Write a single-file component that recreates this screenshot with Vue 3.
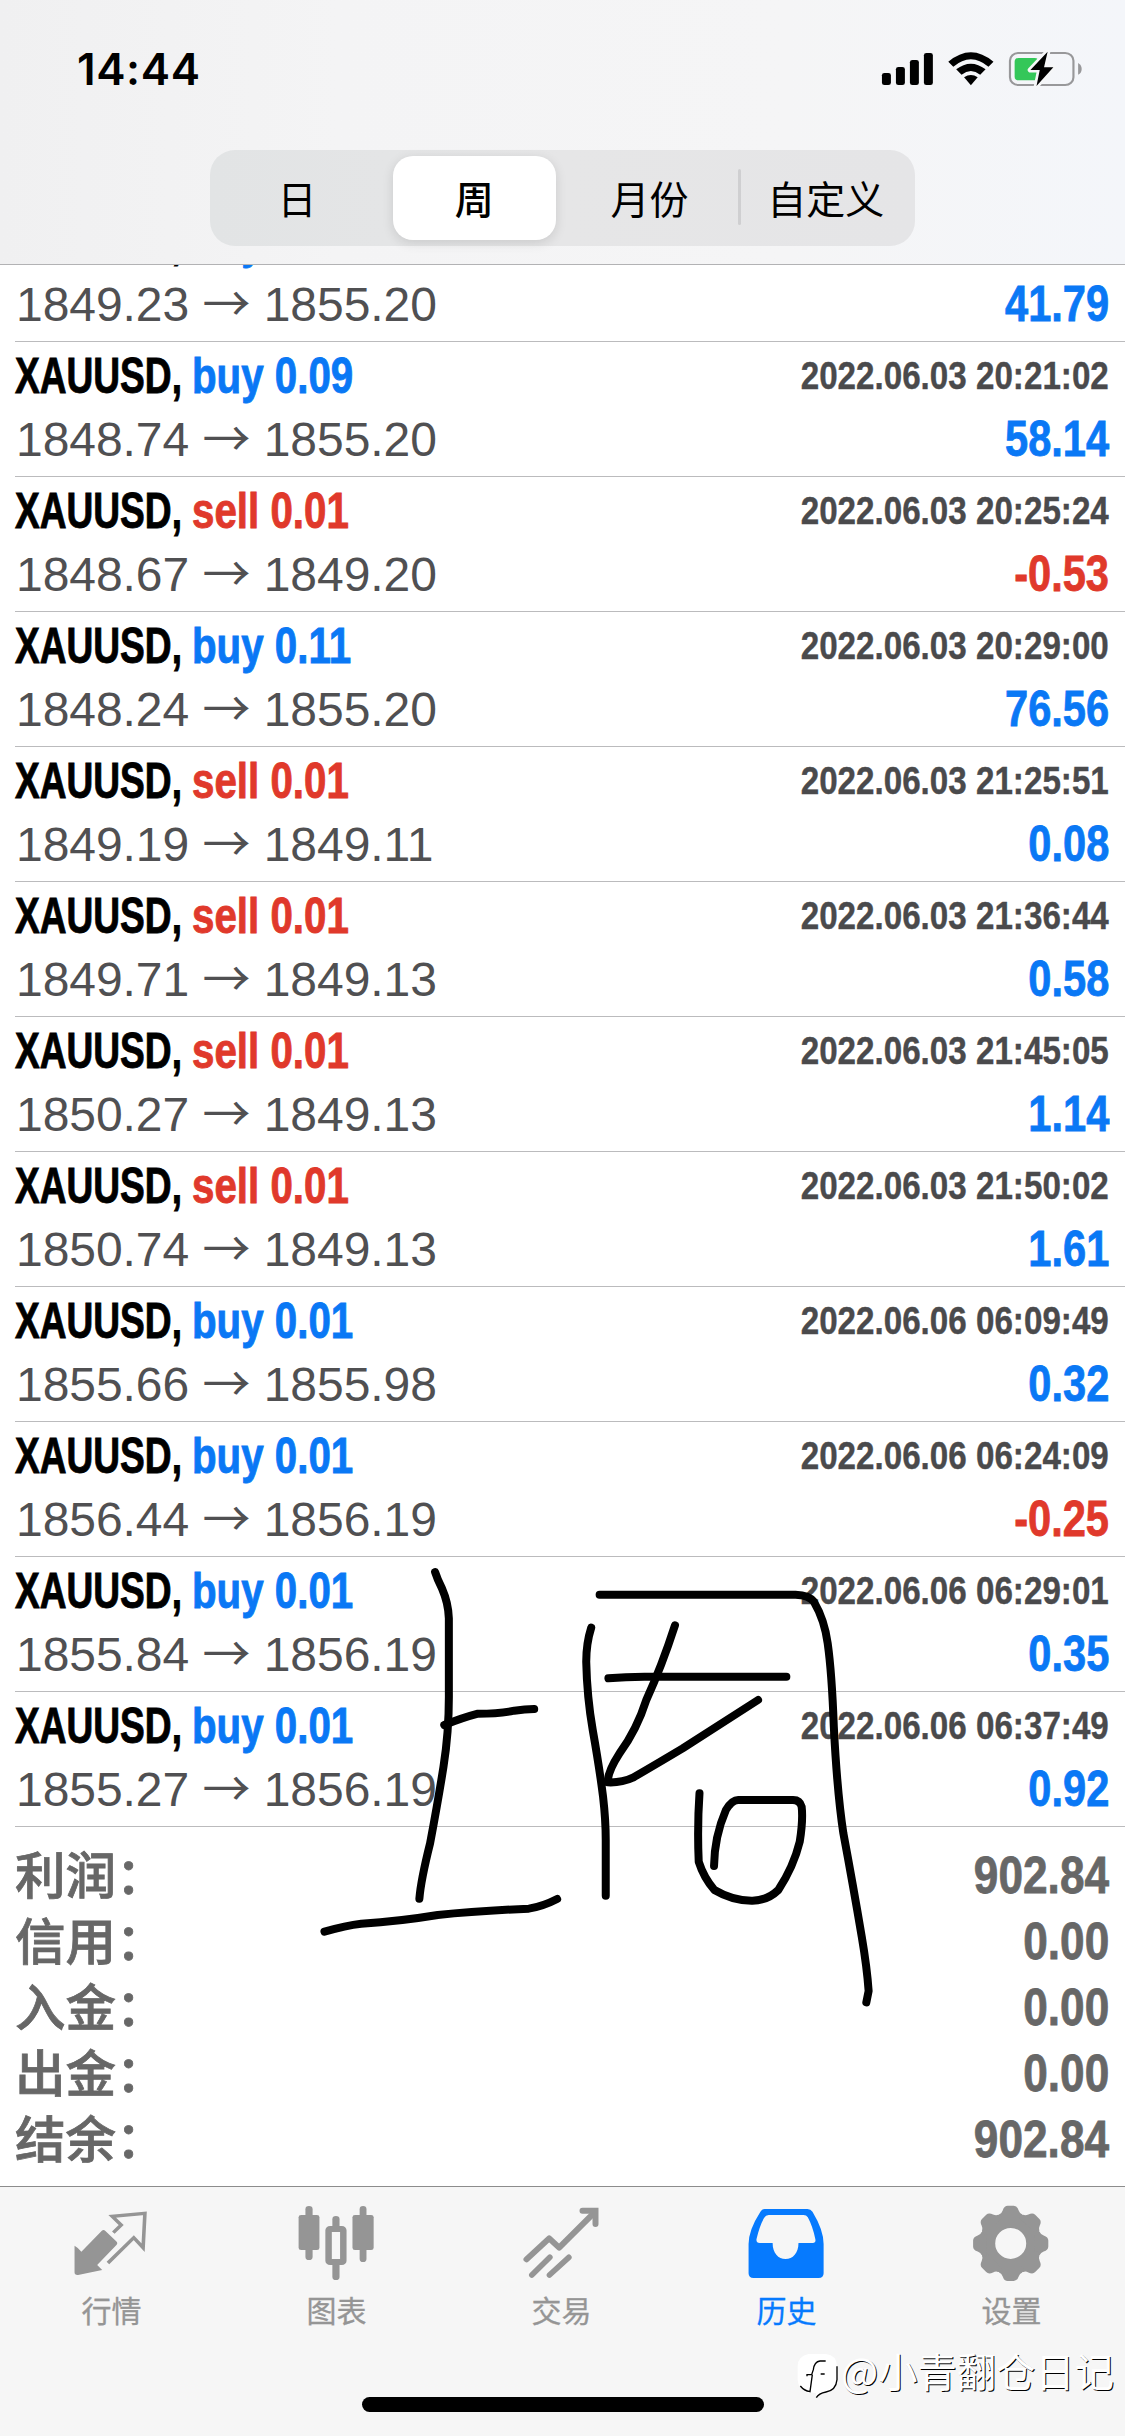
<script setup>
const segments = ['日', '周', '月份', '自定义']

const deals = [
  ['buy', '0.07', '2022.06.03 20:17:31', '1849.23', '1855.20', '41.79'],
  ['buy', '0.09', '2022.06.03 20:21:02', '1848.74', '1855.20', '58.14'],
  ['sell', '0.01', '2022.06.03 20:25:24', '1848.67', '1849.20', '-0.53'],
  ['buy', '0.11', '2022.06.03 20:29:00', '1848.24', '1855.20', '76.56'],
  ['sell', '0.01', '2022.06.03 21:25:51', '1849.19', '1849.11', '0.08'],
  ['sell', '0.01', '2022.06.03 21:36:44', '1849.71', '1849.13', '0.58'],
  ['sell', '0.01', '2022.06.03 21:45:05', '1850.27', '1849.13', '1.14'],
  ['sell', '0.01', '2022.06.03 21:50:02', '1850.74', '1849.13', '1.61'],
  ['buy', '0.01', '2022.06.06 06:09:49', '1855.66', '1855.98', '0.32'],
  ['buy', '0.01', '2022.06.06 06:24:09', '1856.44', '1856.19', '-0.25'],
  ['buy', '0.01', '2022.06.06 06:29:01', '1855.84', '1856.19', '0.35'],
  ['buy', '0.01', '2022.06.06 06:37:49', '1855.27', '1856.19', '0.92'],
].map(([side, volume, time, open, close, profit]) => ({ side, volume, time, open, close, profit }))

const totals = [
  ['利润：', '902.84'],
  ['信用：', '0.00'],
  ['入金：', '0.00'],
  ['出金：', '0.00'],
  ['结余：', '902.84'],
]

const teeth = [0, 45, 90, 135, 180, 225, 270, 315]
</script>

<template>
  <div class="screen">
    <header class="top">
      <div class="status">
        <span class="clock">14:44</span>
        <svg class="signals" viewBox="880 150 580 114" preserveAspectRatio="none">
          <rect x="891" y="219" width="25" height="36" rx="7" />
          <rect x="930" y="201" width="25" height="54" rx="7" />
          <rect x="969" y="180" width="25" height="75" rx="7" />
          <rect x="1008" y="159" width="25" height="96" rx="7" />
          <path d="M1076 185Q1139 128 1202 185L1188 200Q1139 155 1090 200Z" />
          <path d="M1098 208Q1139 174 1180 208L1165 224Q1139 202 1113 224Z" />
          <path d="M1120 232Q1139 218 1158 232L1139 256Z" />
          <rect x="1248" y="159" width="177" height="96" rx="23" fill="none" stroke="#98989a" stroke-width="6" />
          <path d="M1438 189Q1448 195 1448 207T1438 224Z" fill="#98989a" />
          <rect x="1261" y="174" width="67" height="67" rx="11" fill="#34c759" />
          <path d="M1353 155L1305 210H1331L1322 258L1369 202H1343Z" fill="#000" stroke="#f6f7f8" stroke-width="15" paint-order="stroke" stroke-linejoin="round" />
        </svg>
      </div>
      <nav class="segmented">
        <div v-for="(s, i) in segments" :key="s" class="segment" :class="{ on: i === 1, ruled: i === 3 }">
          <span>{{ s }}</span>
        </div>
      </nav>
    </header>

    <main class="history">
      <div class="deals">
        <article v-for="d in deals" :key="d.time" class="deal">
          <div class="line">
            <div class="title">
              <span class="symbol">XAUUSD,</span>
              <span class="side" :class="d.side">{{ d.side }} {{ d.volume }}</span>
            </div>
            <time>{{ d.time }}</time>
          </div>
          <div class="line">
            <span class="prices">{{ d.open }} <i>→</i> {{ d.close }}</span>
            <span class="profit" :class="{ loss: d.profit[0] === '-' }">{{ d.profit }}</span>
          </div>
        </article>
      </div>
      <dl class="totals">
        <div v-for="[label, value] in totals" :key="label">
          <dt>{{ label }}</dt>
          <dd>{{ value }}</dd>
        </div>
      </dl>
      <svg class="scribble" viewBox="0 0 1568 1500" preserveAspectRatio="none">
        <path d="M353 96Q359 118 371 145Q388 190 389 235V455Q390 570 375 680Q362 775 340 910Q316 1020 312 1076" />
        <path d="M377 555Q425 533 465 521Q520 521 560 512Q588 508 612 507" />
        <path d="M64 1175Q120 1156 160 1151Q260 1144 360 1125Q460 1113 598 1106Q635 1099 672 1077" />
        <path d="M761 263Q748 310 748 365Q750 470 765 570Q782 680 792 770Q799 840 799 900V1067" />
        <path d="M783 164H1295Q1330 165 1343 185Q1371 240 1379 310Q1390 400 1395 560Q1404 760 1420 880Q1446 1040 1468 1190Q1482 1285 1486 1353L1480 1387" />
        <path d="M980 256Q945 380 905 480Q880 570 835 640Q804 695 804 727Q840 729 870 713Q930 673 1000 625L1197 480" />
        <path d="M806 415Q850 410 900 410H1271" />
        <path d="M1044 760Q1038 860 1042 965Q1055 1012 1083 1050Q1130 1082 1180 1082Q1220 1083 1250 1050Q1290 980 1306 905Q1315 840 1311 800Q1306 778 1285 780H1145Q1129 780 1113 810Q1083 890 1082 978" />
      </svg>
    </main>

    <footer class="tabs">
      <div class="tab">
        <svg viewBox="188 60 250.65 270" preserveAspectRatio="none">
          <path d="M209 197Q218 202 228 215L285 152Q290 147 295 153L325 184Q331 190 325 196L272 255L286 270Q250 278 219 285Q209 286 209 277Z" />
          <path d="M317 158L339 135L314 109L405 100L400 203L374 173L302 249" fill="none" stroke="currentColor" stroke-width="10" />
        </svg>
        <span>行情</span>
      </div>
      <div class="tab">
        <svg viewBox="814.6 60 250.65 270" preserveAspectRatio="none">
          <rect x="852" y="78" width="20" height="162" rx="10" />
          <rect x="833" y="105" width="58" height="105" rx="7" />
          <rect x="1003" y="78" width="19" height="168" rx="10" />
          <rect x="983" y="105" width="59" height="105" rx="7" />
          <rect x="927" y="108" width="20" height="60" rx="10" />
          <rect x="927" y="225" width="20" height="75" rx="10" />
          <rect x="916.5" y="147" width="41" height="99" rx="4" fill="#f6f6f6" stroke="currentColor" stroke-width="18" />
        </svg>
        <span>图表</span>
      </div>
      <div class="tab">
        <svg viewBox="22.5 15 270 270">
          <g fill="none" stroke="currentColor" stroke-width="18" stroke-linecap="round">
            <path d="M51 193L119 130L149 158L255 52" stroke-linejoin="round" />
            <path d="M219 47H258V87" />
            <path d="M67 240L121 187M120 240L178 187" stroke-width="17" />
          </g>
        </svg>
        <span>交易</span>
      </div>
      <div class="tab active">
        <svg viewBox="502.7 60 250.65 270" preserveAspectRatio="none">
          <path fill-rule="evenodd" d="M566 87H685Q694 87 699 95Q730 150 730 192V280Q730 294 716 294H535Q521 294 521 280V192Q521 150 554 95Q559 87 566 87ZM577 105Q569 105 564 114Q551 140 543 178Q542 189 552 189H588C588 220 604 237 624 237S660 220 660 189H700Q709 189 707 178Q700 140 686 112Q682 105 674 105Z" />
        </svg>
        <span>历史</span>
      </div>
      <div class="tab">
        <svg viewBox="0 0 90 90">
          <g transform="translate(43.7 43.4)">
            <circle r="23.2" fill="none" stroke="currentColor" stroke-width="15.4" />
            <path v-for="a in teeth" :key="a" :transform="`rotate(${a})`" d="M-13 -24L-11.5 -29Q-9 -30 -8 -33Q-6.5 -37.6 -3 -37.6H3Q6.5 -37.6 8 -33Q9 -30 11.5 -29L13 -24Z" />
          </g>
        </svg>
        <span>设置</span>
      </div>
      <div class="home-bar"></div>
      <div class="credit">
        <svg viewBox="0 0 126 144">
          <path d="M38 3H90Q122 6 123 40V78Q120 112 88 117Q68 120 60 134V120Q45 117 36 120Q8 112 5 82V40Q6 8 38 3Z" fill="#fff" />
          <path d="M123 40V80Q120 112 90 117Q68 121 61 134M89 24H72Q55 26 52 50L47 65H33V70M49 65L42 116Q24 113 13 99M74 63H86" fill="none" stroke="#000" stroke-width="4" />
        </svg>
        <span>@小青翻仓日记</span>
      </div>
    </footer>
  </div>
</template>

<style>
html,
body {
  background: #fff;
}
</style>

<style scoped>
.screen {
  width: 1125px;
  height: 2436px;
  display: flex;
  flex-direction: column;
  overflow: hidden;
  background: #fff;
  font-family: "Liberation Sans", "Noto Sans CJK SC", sans-serif;
}

.top {
  flex: none;
  box-sizing: border-box;
  height: 265px;
  border-bottom: 1px solid #b2b2b4;
  background: linear-gradient(90deg, #f0f0f1 0, #f4f4f5 30%, #f5f5f6 70%, #f4f6fa 100%);
}

.status {
  display: flex;
  justify-content: space-between;
  align-items: flex-start;
  height: 150px;
  padding: 0 39px 0 77px;
  box-sizing: border-box;
}

.clock {
  margin-top: 42px;
  font: 600 44px/54px Inter, sans-serif;
  letter-spacing: 0.6px;
}

.signals {
  width: 208px;
  height: 38px;
  margin-top: 50px;
}

.segmented {
  display: flex;
  width: 705px;
  height: 96px;
  margin-left: 210px;
  border-radius: 25px;
  background: linear-gradient(90deg, #e2e4e5, #e6e6e7 50%, #e5e5e7);
}

.segment {
  position: relative;
  flex: 1;
  display: flex;
  padding: 6px 8px 6px 6px;
  font: 400 39px/82px "Noto Sans CJK SC", sans-serif;
}

.segment span {
  flex: 1;
  height: 84px;
  text-align: center;
}

.segment.on span {
  border-radius: 20px;
  background: #fff;
  font-weight: 500;
  box-shadow: 0 3px 12px rgba(0, 0, 0, 0.12);
}

.segment.on {
  padding: 6px 7px;
}

.segment.ruled::before {
  content: "";
  position: absolute;
  left: -1px;
  top: 19px;
  width: 3px;
  height: 56px;
  border-radius: 2px;
  background: #cfcfd1;
}

.history {
  position: relative;
  flex: none;
  height: 1921px;
  overflow: hidden;
}

.deals {
  margin-top: -58px;
  padding-left: 15px;
}

.deal {
  height: 134px;
  padding-right: 16px;
  border-bottom: 1px solid #bbbbbd;
}

.line {
  display: flex;
  justify-content: space-between;
  height: 67px;
  line-height: 67px;
  white-space: nowrap;
}

.title {
  display: flex;
  font-size: 50px;
  font-weight: 700;
  line-height: 69px;
  -webkit-text-stroke: 0.9px currentColor;
}

.symbol {
  width: 177px;
  transform: scaleX(0.742);
  transform-origin: left;
  color: #000;
}

.side {
  transform: scaleX(0.806);
  transform-origin: left;
}

.buy,
.profit {
  color: #0a78f5;
}

.sell,
.profit.loss {
  color: #e0392b;
}

time {
  font-size: 39.5px;
  font-weight: 700;
  color: #4a4a4c;
  transform: scaleX(0.84);
  transform-origin: right;
  -webkit-text-stroke: 0.4px currentColor;
}

.prices {
  padding-left: 1px;
  font-size: 48px;
  letter-spacing: -0.05px;
  line-height: 61px;
  color: #505052;
}

.prices i {
  font: normal 48px/0 "Noto Sans CJK SC", sans-serif;
}

.profit {
  font-size: 50px;
  font-weight: 700;
  line-height: 61px;
  transform: scaleX(0.832);
  transform-origin: right;
  -webkit-text-stroke: 0.8px currentColor;
}

.totals {
  margin: 0;
  padding: 15px 16px 0 15px;
}

.totals div {
  display: flex;
  justify-content: space-between;
  height: 66px;
  color: #676767;
}

.totals dt {
  font: 500 50.5px/60px "Noto Sans CJK SC", sans-serif;
  -webkit-text-stroke: 0.8px currentColor;
}

.totals dd {
  margin: 0;
  font-size: 52px;
  font-weight: 700;
  line-height: 66px;
  transform: scaleX(0.85);
  transform-origin: right;
  -webkit-text-stroke: 0.8px currentColor;
}

.scribble {
  position: absolute;
  left: 300px;
  top: 1275px;
  width: 600px;
  height: 500px;
}

.scribble path {
  fill: none;
  stroke: #000;
  stroke-width: 8px;
  stroke-linecap: round;
  stroke-linejoin: round;
  vector-effect: non-scaling-stroke;
}

.tabs {
  position: relative;
  flex: 1;
  display: flex;
  align-items: flex-start;
  border-top: 1px solid #8c8c8c;
  background: #f6f6f6;
}

.tab {
  flex: 1;
  display: flex;
  flex-direction: column;
  align-items: center;
  padding: 13px 2px 0 0;
  color: #959595;
}

.tab svg {
  width: 90px;
  height: 90px;
  fill: currentColor;
}

.tab span {
  margin-top: -1px;
  font: 400 30px/40px "Noto Sans CJK SC", sans-serif;
  -webkit-text-stroke: 0.3px currentColor;
}

.tab.active {
  color: #067afe;
}

.home-bar {
  position: absolute;
  left: 362px;
  top: 210px;
  width: 402px;
  height: 15px;
  border-radius: 8px;
  background: #000;
}

.credit {
  position: absolute;
  left: 796px;
  top: 166px;
  display: flex;
  align-items: flex-start;
}

.credit svg {
  width: 42px;
  height: 48px;
}

.credit span {
  margin: -3px 0 0 3px;
  font: 400 39.3px/40px "Noto Sans CJK SC", sans-serif;
  color: #fff;
  text-shadow: 1px 1px 0 #000;
  white-space: nowrap;
}
</style>
